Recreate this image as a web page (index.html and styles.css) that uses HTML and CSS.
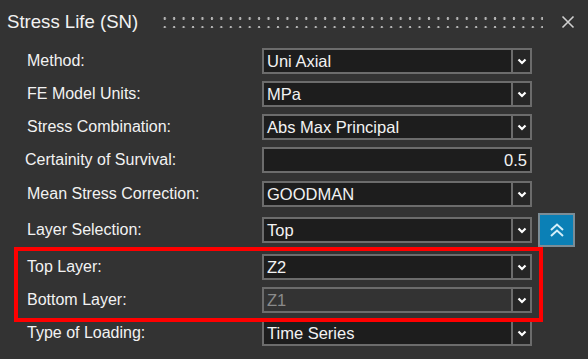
FILE: index.html
```html
<!DOCTYPE html>
<html lang="en">
<head>
  <meta charset="UTF-8">
  <title>Stress Life (SN)</title>
  <link rel="stylesheet" href="styles.css">
</head>
<body>

  <div class="panel">
    <div class="titlebar">
      <span class="title">Stress Life (SN)</span>
      <span class="grip"></span>
      <svg class="close" width="14" height="14" viewBox="0 0 14 14">
        <path d="M1.5 1.5 L12.5 12.5 M12.5 1.5 L1.5 12.5" stroke="#d0d0d0" stroke-width="1.6" fill="none"/>
      </svg>
    </div>

    <div class="form">
      <div class="row">
        <label>Method:</label>
        <div class="combo"><span class="value">Uni Axial</span><span class="arrow"><svg width="10" height="7" viewBox="0 0 10 7"><path d="M1.5 1.5 L5 5 L8.5 1.5" stroke="#fff" stroke-width="2.2" fill="none"/></svg></span></div>
      </div>
      <div class="row">
        <label>FE Model Units:</label>
        <div class="combo"><span class="value">MPa</span><span class="arrow"><svg width="10" height="7" viewBox="0 0 10 7"><path d="M1.5 1.5 L5 5 L8.5 1.5" stroke="#fff" stroke-width="2.2" fill="none"/></svg></span></div>
      </div>
      <div class="row">
        <label>Stress Combination:</label>
        <div class="combo"><span class="value">Abs Max Principal</span><span class="arrow"><svg width="10" height="7" viewBox="0 0 10 7"><path d="M1.5 1.5 L5 5 L8.5 1.5" stroke="#fff" stroke-width="2.2" fill="none"/></svg></span></div>
      </div>
      <div class="row after-certainty">
        <label class="shift">Certainity of Survival:</label>
        <div class="combo number"><span class="value">0.5</span></div>
      </div>
      <div class="row after-mean">
        <label>Mean Stress Correction:</label>
        <div class="combo"><span class="value">GOODMAN</span><span class="arrow"><svg width="10" height="7" viewBox="0 0 10 7"><path d="M1.5 1.5 L5 5 L8.5 1.5" stroke="#fff" stroke-width="2.2" fill="none"/></svg></span></div>
      </div>
      <div class="row after-layer">
        <label>Layer Selection:</label>
        <div class="combo"><span class="value">Top</span><span class="arrow"><svg width="10" height="7" viewBox="0 0 10 7"><path d="M1.5 1.5 L5 5 L8.5 1.5" stroke="#fff" stroke-width="2.2" fill="none"/></svg></span></div>
        <button class="collapse">
          <svg width="16" height="16" viewBox="0 0 16 16">
            <path d="M2 8 L8 2.5 L14 8 M2 14 L8 8.5 L14 14" stroke="#d4eef9" stroke-width="2" fill="none"/>
          </svg>
        </button>
      </div>
      <div class="row">
        <label>Top Layer:</label>
        <div class="combo"><span class="value">Z2</span><span class="arrow"><svg width="10" height="7" viewBox="0 0 10 7"><path d="M1.5 1.5 L5 5 L8.5 1.5" stroke="#fff" stroke-width="2.2" fill="none"/></svg></span></div>
      </div>
      <div class="row">
        <label>Bottom Layer:</label>
        <div class="combo disabled"><span class="value">Z1</span><span class="arrow"><svg width="10" height="7" viewBox="0 0 10 7"><path d="M1.5 1.5 L5 5 L8.5 1.5" stroke="#fff" stroke-width="2.2" fill="none"/></svg></span></div>
      </div>
      <div class="row">
        <label>Type of Loading:</label>
        <div class="combo"><span class="value">Time Series</span><span class="arrow"><svg width="10" height="7" viewBox="0 0 10 7"><path d="M1.5 1.5 L5 5 L8.5 1.5" stroke="#fff" stroke-width="2.2" fill="none"/></svg></span></div>
      </div>
    </div>

    <div class="highlight"></div>
  </div>

</body>
</html>
```

FILE: styles.css
```css
body {
  margin: 0;
  background: #333333;
  font-family: "Liberation Sans", Arial, sans-serif;
  color: #f2f2f2;
}

.panel {
  position: relative;
  width: 588px;
  height: 359px;
  overflow: hidden;
}

.titlebar {
  display: flex;
  align-items: center;
  height: 44px;
  padding-left: 7px;
}

.title {
  font-size: 18.6px;
  white-space: nowrap;
}

.grip {
  flex: 1;
  height: 12px;
  margin-left: 22px;
  margin-right: 18px;
  background-image: radial-gradient(circle, #b4b4b4 1.1px, transparent 1.5px);
  background-size: 9.45px 9px;
  background-position: 0 -2px;
  background-repeat: repeat;
}

.close {
  margin-right: 13px;
}

.form {
  padding-left: 27px;
  padding-top: 4px;
}

.row {
  display: flex;
  align-items: center;
  height: 26px;
  margin-bottom: 7px;
}

.row label {
  width: 235px;
  font-size: 16px;
}

.row label.shift {
  margin-left: -2px;
  width: 237px;
}

.after-certainty {
  margin-bottom: 8px;
}

.after-mean {
  margin-bottom: 10px;
}

.after-layer {
  margin-bottom: 11px;
}

.combo {
  box-sizing: border-box;
  display: flex;
  width: 270px;
  height: 26px;
  border: 2px solid #6c6c6c;
  background: #1d1d1d;
  font-size: 16.5px;
}

.combo .value {
  flex: 1;
  padding-left: 3px;
  line-height: 22px;
  white-space: nowrap;
}

.combo .arrow {
  width: 17px;
  border-left: 2px solid #6c6c6c;
  background: #262626;
  display: flex;
  align-items: center;
  justify-content: center;
}

.combo.number .value {
  text-align: right;
  padding-right: 3px;
}

.combo.disabled {
  background: #333333;
}

.combo.disabled .value {
  color: #8a8a8a;
}

.collapse {
  box-sizing: border-box;
  width: 37px;
  height: 34px;
  margin-left: 6px;
  padding: 0;
  border: 2px solid #7b8d97;
  background: #0b80b6;
  display: flex;
  align-items: center;
  justify-content: center;
}

.highlight {
  position: absolute;
  left: 14px;
  top: 247px;
  width: 529px;
  height: 75px;
  box-sizing: border-box;
  border: 4px solid #ff0000;
}
```
